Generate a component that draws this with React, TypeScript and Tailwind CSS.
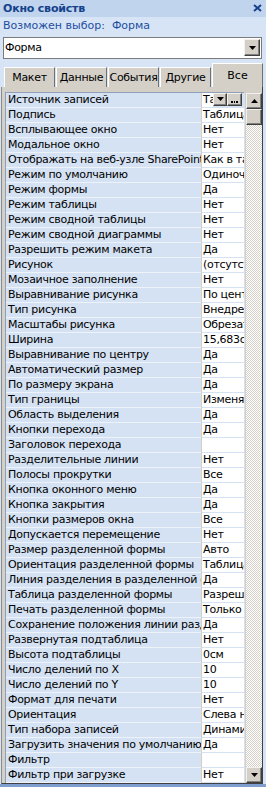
import React from 'react'

const rows: [string, string][] = [
  ['Источник записей', 'Таблица1'],
  ['Подпись', 'Таблица1'],
  ['Всплывающее окно', 'Нет'],
  ['Модальное окно', 'Нет'],
  ['Отображать на веб-узле SharePoint', 'Как в таблице'],
  ['Режим по умолчанию', 'Одиночная форма'],
  ['Режим формы', 'Да'],
  ['Режим таблицы', 'Нет'],
  ['Режим сводной таблицы', 'Нет'],
  ['Режим сводной диаграммы', 'Нет'],
  ['Разрешить режим макета', 'Да'],
  ['Рисунок', '(отсутствует)'],
  ['Мозаичное заполнение', 'Нет'],
  ['Выравнивание рисунка', 'По центру'],
  ['Тип рисунка', 'Внедренный'],
  ['Масштабы рисунка', 'Обрезать'],
  ['Ширина', '15,683см'],
  ['Выравнивание по центру', 'Да'],
  ['Автоматический размер', 'Да'],
  ['По размеру экрана', 'Да'],
  ['Тип границы', 'Изменяемая'],
  ['Область выделения', 'Да'],
  ['Кнопки перехода', 'Да'],
  ['Заголовок перехода', ''],
  ['Разделительные линии', 'Нет'],
  ['Полосы прокрутки', 'Все'],
  ['Кнопка оконного меню', 'Да'],
  ['Кнопка закрытия', 'Да'],
  ['Кнопки размеров окна', 'Все'],
  ['Допускается перемещение', 'Нет'],
  ['Размер разделенной формы', 'Авто'],
  ['Ориентация разделенной формы', 'Таблица сверху'],
  ['Линия разделения в разделенной форме', 'Да'],
  ['Таблица разделенной формы', 'Разрешить правку'],
  ['Печать разделенной формы', 'Только форма'],
  ['Сохранение положения линии разделения', 'Да'],
  ['Развернутая подтаблица', 'Нет'],
  ['Высота подтаблицы', '0см'],
  ['Число делений по X', '10'],
  ['Число делений по Y', '10'],
  ['Формат для печати', 'Нет'],
  ['Ориентация', 'Слева направо'],
  ['Тип набора записей', 'Динамический набор'],
  ['Загрузить значения по умолчанию', 'Да'],
  ['Фильтр', ''],
  ['Фильтр при загрузке', 'Нет'],
]

const tabs = ['Макет', 'Данные', 'События', 'Другие']

function Arrow({ up = false }: { up?: boolean }) {
  return (
    <svg width="7" height="4" viewBox="0 0 7 4" className={up ? 'rotate-180' : ''}>
      <path d="M0 0h7L3.5 4z" fill="#000" />
    </svg>
  )
}

function Btn({ className, children }: { className: string; children?: React.ReactNode }) {
  return (
    <div
      className={
        'flex items-center justify-center bg-[#d4d0c8] border-t border-l border-t-[#f2f1ed] border-l-[#f2f1ed] border-b border-r border-b-[#404040] border-r-[#404040] shadow-[inset_-1px_-1px_#808080] ' +
        className
      }
    >
      {children}
    </div>
  )
}

export default function App() {
  return (
    <div className="w-[266px] h-[787px] bg-[#d6e4f6] flex flex-col font-['DejaVu_Sans',sans-serif] text-[11px] leading-none text-black overflow-hidden">
      {/* Title */}
      <div className="h-[17px] bg-[#c0d4ed] flex items-center justify-between pl-[3px] pr-[4px]">
        <span className="font-bold text-[#15428b] text-[11px] tracking-[-0.2px]">Окно свойств</span>
        <svg width="9" height="8" viewBox="0 0 9 8">
          <path d="M1 1l7 6M8 1L1 7" stroke="#15428b" strokeWidth="2" />
        </svg>
      </div>
      <div className="h-[17px] flex items-center pl-[3px] text-[#1d4f9f] text-[11px]">
        Возможен выбор:&nbsp;&nbsp;Форма
      </div>

      {/* Combobox */}
      <div className="mt-[3px] ml-[3px] w-[259px] h-[22px] bg-white border border-[#7b7b7b] flex items-center justify-between pl-[1px] pr-[1px]">
        <span className="text-[11px] tracking-[-0.3px]">Форма</span>
        <Btn className="w-[16px] h-[17px]">
          <Arrow />
        </Btn>
      </div>

      {/* Tabs */}
      <div className="mt-[4px] h-[24px] flex items-end pl-[4px]">
        {tabs.map((t) => (
          <div
            key={t}
            className="w-[51px] h-[20px] mr-[1px] bg-[#d4d0c8] border-t border-l border-t-[#ffffff] border-l-[#ffffff] border-r border-r-[#6f6f6f] flex items-center justify-center text-[11px] tracking-[-0.3px]"
          >
            {t}
          </div>
        ))}
        <div className="w-[51px] h-[24px] bg-[#d4d0c8] border-t border-l border-t-[#ffffff] border-l-[#ffffff] border-r border-r-[#6f6f6f] flex items-start justify-center pt-[6px] text-[11px]">
          Все
        </div>
      </div>

      {/* Panel */}
      <div className="ml-[1px] w-[262px] h-[698px] bg-[#d4d0c8] border-l border-l-[#8c8c8c] border-r border-r-[#404040] border-b border-b-[#404040] pt-[5px] pl-[3px] flex gap-[2px]">
        <div className="w-[239px] flex flex-col border-l border-t border-[#8f9fb5] tracking-[-0.3px]">
          {rows.map(([label, value], i) => (
            <div key={label} className="h-[15px] flex shrink-0">
              <div className="w-[195px] shrink-0 bg-[#d5e2f3] border-b border-b-[#eef3fa] flex items-center pl-[2px] overflow-hidden whitespace-nowrap">
                {label}
              </div>
              <div className="w-[43px] shrink-0 ml-px border-b border-b-[#d5e2f3] bg-[#d5e2f3] flex">
                {i === 0 ? (
                  <>
                    <div className="w-[11px] bg-white overflow-hidden whitespace-nowrap flex items-center pl-[1px]">
                      {value}
                    </div>
                    <Btn className="w-[14px] h-[13px]">
                      <Arrow />
                    </Btn>
                    <Btn className="w-[15px] h-[13px] items-end pb-[2px]">
                      <svg width="7" height="2" viewBox="0 0 7 2">
                        <path d="M0 0h2v2H0zM3 0h1v2H3zM5 0h2v2H5z" fill="#000" />
                      </svg>
                    </Btn>
                  </>
                ) : (
                  <div className="w-[42px] bg-white overflow-hidden whitespace-nowrap flex items-center pl-[1px]">
                    {value}
                  </div>
                )}
              </div>
            </div>
          ))}
        </div>

        {/* Scrollbar */}
        <div className="w-[16px] h-[690px] mt-px flex flex-col">
          <Btn className="h-[16px] shrink-0">
            <Arrow up />
          </Btn>
          <Btn className="h-[16px] shrink-0" />
          <div className="flex-1 bg-[repeating-conic-gradient(#d4d0c8_0%_25%,#ffffff_0%_50%)] bg-[length:2px_2px]" />
          <Btn className="h-[16px] shrink-0">
            <Arrow />
          </Btn>
        </div>
      </div>
      <div className="flex-1 bg-[#d6e4f6]" />
      <div className="h-[3px] bg-[#7f9fd1]" />
    </div>
  )
}
